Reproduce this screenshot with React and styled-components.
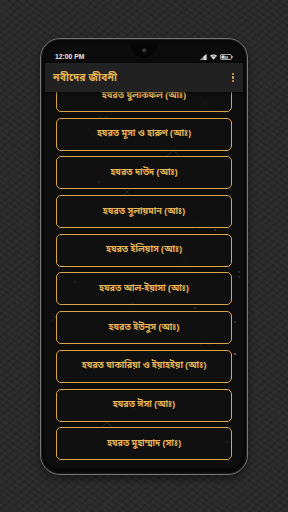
import React from "react";
import styled, { createGlobalStyle } from "styled-components";

const GlobalStyle = createGlobalStyle`
  html, body {
    margin: 0;
    padding: 0;
    width: 288px;
    height: 512px;
    overflow: hidden;
  }
  body {
    background-color: #2a2a2a;
    background-image:
      repeating-linear-gradient(35deg, rgba(255,255,255,0.025) 0 2px, transparent 2px 5px),
      repeating-linear-gradient(-40deg, rgba(0,0,0,0.12) 0 2px, transparent 2px 6px);
    font-family: "Noto Sans Bengali", "Noto Sans", "Liberation Sans", sans-serif;
  }
`;

const Page = styled.div`
  width: 288px;
  height: 512px;
  display: flex;
  justify-content: center;
  padding-top: 38px;
  box-sizing: border-box;
`;

const Phone = styled.div`
  width: 208px;
  height: 437px;
  box-sizing: border-box;
  border-radius: 20px;
  border: 1.5px solid #767676;
  background: #080808;
  padding: 5px 4px 6px;
  box-shadow: 0 4px 10px rgba(0, 0, 0, 0.45), inset 0 0 0 1px #1c1c1c;
`;

const Screen = styled.div`
  position: relative;
  height: 100%;
  border-radius: 14px;
  overflow: hidden;
  background: #0d0d0d;
  display: flex;
  flex-direction: column;
`;

const StatusBar = styled.div`
  position: relative;
  height: 19px;
  flex-shrink: 0;
  display: flex;
  align-items: center;
  justify-content: space-between;
  padding: 0 10px 0 10px;
  background: #0b0b0b;
  z-index: 2;
`;

const Clock = styled.span`
  font-family: "Liberation Sans", Arial, sans-serif;
  font-weight: 700;
  font-size: 6.8px;
  color: #e8e8e8;
  margin-top: 6px;
`;

const Notch = styled.div`
  position: absolute;
  left: 50%;
  top: 0;
  transform: translateX(-50%);
  width: 26px;
  height: 14px;
  background: #050505;
  border-radius: 0 0 13px 13px;
  display: flex;
  justify-content: center;
  align-items: center;
`;

const Camera = styled.div`
  width: 5px;
  height: 5px;
  border-radius: 50%;
  background: radial-gradient(circle at 40% 40%, #3c4a52, #111 70%);
  margin-top: -1px;
`;

const StatusIcons = styled.div`
  display: flex;
  align-items: center;
  gap: 3px;
  margin-top: 6px;
`;

const AppBar = styled.div`
  height: 29px;
  flex-shrink: 0;
  display: flex;
  align-items: center;
  justify-content: space-between;
  padding: 0 9px 0 8px;
  background: #212121;
  box-shadow: 0 1px 3px rgba(0, 0, 0, 0.6);
  z-index: 2;
`;

const Title = styled.h1`
  margin: 0;
  font-size: 10.5px;
  font-weight: 700;
  color: #e3b152;
  letter-spacing: 0.1px;
`;

const Dots = styled.div`
  display: flex;
  flex-direction: column;
  gap: 1.2px;
`;

const Dot = styled.span`
  width: 2.4px;
  height: 2.4px;
  border-radius: 50%;
  background: #e3b152;
`;

const List = styled.div`
  position: relative;
  flex: 1;
  overflow: hidden;
`;

const Sparkles = styled.svg`
  position: absolute;
  inset: 0;
  width: 100%;
  height: 100%;
  pointer-events: none;
`;

const Items = styled.div`
  position: relative;
  display: flex;
  flex-direction: column;
  gap: 5.7px;
  padding: 0 11px;
  margin-top: -13px;
`;

const Card = styled.div`
  height: 33px;
  box-sizing: border-box;
  border: 1.4px solid #d9a64c;
  border-radius: 5px;
  background: rgba(18, 18, 18, 0.85);
  display: flex;
  align-items: center;
  justify-content: center;
  font-size: 9px;
  font-weight: 700;
  color: #e6b356;
  white-space: nowrap;
`;

const prophets = [
  "হযরত যুলকিফল (আঃ)",
  "হযরত মূসা ও হারুণ (আঃ)",
  "হযরত দাউদ (আঃ)",
  "হযরত সুলায়মান (আঃ)",
  "হযরত ইলিয়াস (আঃ)",
  "হযরত আল-ইয়াসা (আঃ)",
  "হযরত ইউনুস (আঃ)",
  "হযরত যাকারিয়া ও ইয়াহইয়া (আঃ)",
  "হযরত ঈসা (আঃ)",
  "হযরত মুহাম্মাদ (সাঃ)"
];

const crosses = [
  [48, 42, 6], [128, 58, 6], [160, 10, 5], [82, 100, 4], [150, 132, 5],
  [120, 150, 4], [140, 170, 5], [10, 225, 4], [160, 248, 5], [62, 330, 5], [58, 28, 4]
];

const dots = [
  [12, 0], [180, 20], [118, 52], [54, 90], [170, 138], [80, 104], [30, 190],
  [194, 180], [194, 185], [88, 212], [150, 216], [80, 262], [190, 262],
  [102, 303], [90, 317], [182, 350], [190, 230], [40, 308]
];

const SignalIcon = () => (
  <svg width="8" height="6" viewBox="0 0 8 6">
    <path d="M7.5 0 L7.5 6 L0.5 6 Z" fill="#8a8a8a" />
    <path d="M7.5 0 L7.5 6 L4.5 6 L4.5 2.6 Z" fill="#d8d8d8" />
  </svg>
);

const WifiIcon = () => (
  <svg width="7" height="6" viewBox="0 0 8 6">
    <path d="M0 1.6 C2.2 -0.5 5.8 -0.5 8 1.6 L4 6 Z" fill="#d8d8d8" />
    <path d="M1.6 2.8 C3 1.6 5 1.6 6.4 2.8" stroke="#0b0b0b" strokeWidth="0.6" fill="none" />
  </svg>
);

const BatteryIcon = () => (
  <svg width="13" height="6" viewBox="0 0 13 6">
    <rect x="0.4" y="0.4" width="11" height="5.2" rx="1.4" fill="none" stroke="#d8d8d8" strokeWidth="0.8" />
    <rect x="11.7" y="2" width="0.9" height="2" fill="#d8d8d8" />
    <rect x="1.4" y="1.4" width="3.2" height="3.2" fill="#d8d8d8" />
    <text x="6" y="4.6" fontSize="3.8" fill="#d8d8d8" fontFamily="Liberation Sans, sans-serif" fontWeight="700" textAnchor="middle">38</text>
  </svg>
);

const App = () => (
  <Page>
    <GlobalStyle />
    <Phone>
      <Screen>
        <StatusBar>
          <Clock>12:00 PM</Clock>
          <Notch>
            <Camera />
          </Notch>
          <StatusIcons>
            <SignalIcon />
            <WifiIcon />
            <BatteryIcon />
          </StatusIcons>
        </StatusBar>
        <AppBar>
          <Title>নবীদের জীবনী</Title>
          <Dots>
            <Dot />
            <Dot />
            <Dot />
          </Dots>
        </AppBar>
        <List>
          <Sparkles viewBox="0 0 198 376">
            {crosses.map(([x, y, s], i) => (
              <g key={i} stroke="#3a3a3a" strokeWidth="0.5">
                <line x1={x - s} y1={y - s} x2={x + s} y2={y + s} />
                <line x1={x - s} y1={y + s} x2={x + s} y2={y - s} />
              </g>
            ))}
            {dots.map(([x, y], i) => (
              <circle key={i} cx={x} cy={y} r={i % 3 === 0 ? 1.2 : 0.7} fill="#5c5c5c" />
            ))}
          </Sparkles>
          <Items>
            {prophets.map(name => (
              <Card key={name}>{name}</Card>
            ))}
          </Items>
        </List>
      </Screen>
    </Phone>
  </Page>
);

export default App;
